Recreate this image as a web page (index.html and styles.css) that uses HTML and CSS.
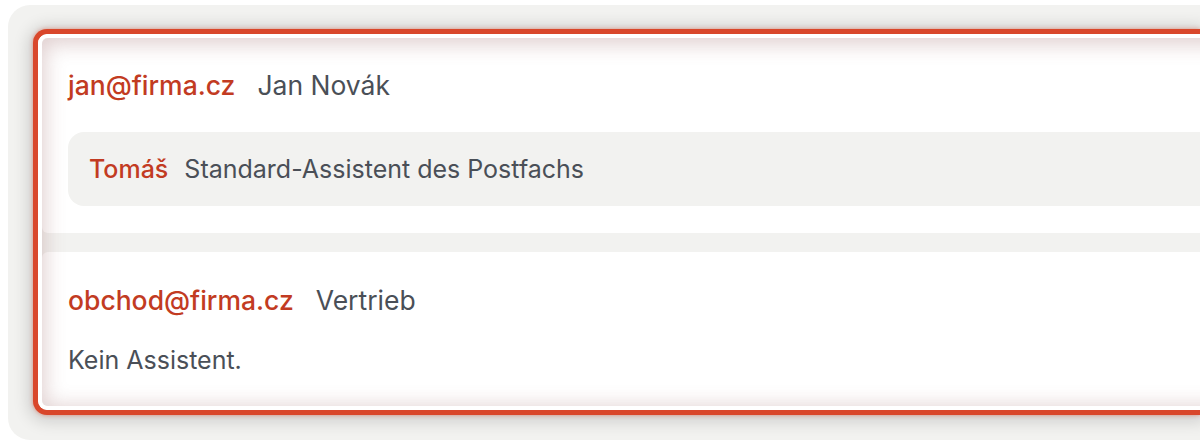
FILE: index.html
```html
<!DOCTYPE html>
<html lang="de">
<head>
<meta charset="utf-8">
<title>Postfächer</title>
<link rel="stylesheet" href="styles.css">
</head>
<body>
<div class="panel">
  <div class="list">
    <div class="card card-first">
      <div class="head"><span class="mail">jan@firma.cz</span><span class="name">Jan Novák</span></div>
      <div class="pill"><span class="who">Tomáš</span><span class="desc">Standard-Assistent des Postfachs</span></div>
    </div>
    <div class="card card-second">
      <div class="head"><span class="mail">obchod@firma.cz</span><span class="name">Vertrieb</span></div>
      <div class="none">Kein Assistent.</div>
    </div>
  </div>
</div>
</body>
</html>
```
FILE: styles.css
```css
html, body {
  margin: 0;
  padding: 0;
  background: #ffffff;
  overflow: hidden;
  font-family: Inter, "Noto Sans", sans-serif;
}
.panel {
  margin: 5px 0 0 8px;
  height: 435px;
  box-sizing: border-box;
  background: #f2f2f0;
  border-radius: 22px 0 0 22px;
  padding: 24px 0 0 25px;
}
.list {
  position: relative;
  overflow: hidden;
  box-sizing: border-box;
  border: 5px solid #d9472b;
  border-right-width: 0;
  border-radius: 14px 0 0 14px;
  padding: 4px 0 4px 4px;
  background: #f2f2f0;
  display: flex;
  flex-direction: column;
  gap: 19px;
  box-shadow: 0 0 4px rgba(217, 71, 43, 0.5), 0 2px 16px 5px rgba(0, 0, 0, 0.14);
}
.list::before {
  content: "";
  position: absolute;
  top: 0;
  bottom: 0;
  left: 0;
  right: -20px;
  border-radius: 9px;
  box-shadow: inset 0 0 0 4px #ffffff;
  pointer-events: none;
  z-index: 0;
}
.list::after {
  content: "";
  position: absolute;
  top: 4px;
  bottom: 4px;
  left: 4px;
  right: -60px;
  border-radius: 6px;
  box-shadow: inset 0 3px 20px 3px rgba(160, 105, 105, 0.32);
  pointer-events: none;
  z-index: 2;
}
.card {
  position: relative;
  z-index: 1;
  background: #ffffff;
  border-radius: 6px 0 0 6px;
  padding: 0 0 0 26px;
}
.card-first {
  padding-top: 31px;
  padding-bottom: 27px;
}
.card-second {
  padding-top: 32px;
  padding-bottom: 30px;
}
.head {
  display: flex;
  gap: 22px;
  font-size: 26.5px;
  line-height: 32px;
  color: #4a4f57;
}
.mail {
  color: #c23b22;
  font-weight: 500;
}
.pill {
  margin-top: 31px;
  background: #f2f2f0;
  border-radius: 16px 0 0 16px;
  padding: 21px 0 21px 21px;
  display: flex;
  gap: 16px;
  font-size: 25px;
  line-height: 32px;
  color: #4a4f57;
}
.who {
  color: #c23b22;
  font-weight: 500;
}
.none {
  margin-top: 28px;
  font-size: 25px;
  line-height: 32px;
  color: #4a4f57;
}
```
